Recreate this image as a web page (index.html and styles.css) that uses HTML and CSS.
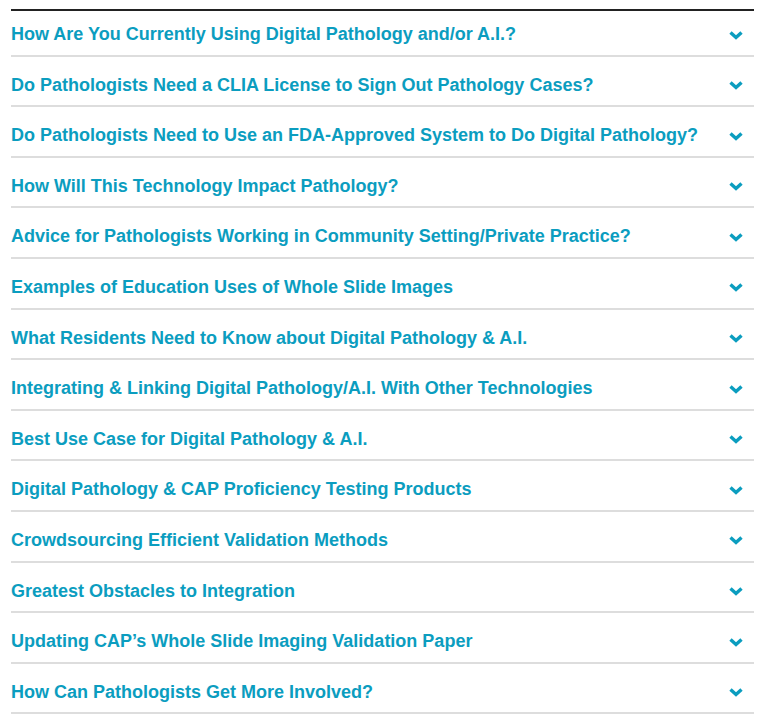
FILE: index.html
```html
<!DOCTYPE html>
<html lang="en">
  <head>
    <meta charset="UTF-8" />
    <meta name="viewport" content="width=device-width, initial-scale=1.0" />
    <title>Digital Pathology FAQ</title>
    <link rel="stylesheet" href="styles.css">
  </head>
  <body>
    <ul class="faq">
      <li class="faqItem"><span class="sporgsmaal">How Are You Currently Using Digital Pathology and/or A.I.?</span><svg class="pil" viewBox="0 0 14 9"><polyline points="1.5,1.5 7,6.5 12.5,1.5" /></svg></li>
      <li class="faqItem"><span class="sporgsmaal">Do Pathologists Need a CLIA License to Sign Out Pathology Cases?</span><svg class="pil" viewBox="0 0 14 9"><polyline points="1.5,1.5 7,6.5 12.5,1.5" /></svg></li>
      <li class="faqItem"><span class="sporgsmaal">Do Pathologists Need to Use an FDA-Approved System to Do Digital Pathology?</span><svg class="pil" viewBox="0 0 14 9"><polyline points="1.5,1.5 7,6.5 12.5,1.5" /></svg></li>
      <li class="faqItem"><span class="sporgsmaal">How Will This Technology Impact Pathology?</span><svg class="pil" viewBox="0 0 14 9"><polyline points="1.5,1.5 7,6.5 12.5,1.5" /></svg></li>
      <li class="faqItem"><span class="sporgsmaal">Advice for Pathologists Working in Community Setting/Private Practice?</span><svg class="pil" viewBox="0 0 14 9"><polyline points="1.5,1.5 7,6.5 12.5,1.5" /></svg></li>
      <li class="faqItem"><span class="sporgsmaal">Examples of Education Uses of Whole Slide Images</span><svg class="pil" viewBox="0 0 14 9"><polyline points="1.5,1.5 7,6.5 12.5,1.5" /></svg></li>
      <li class="faqItem"><span class="sporgsmaal">What Residents Need to Know about Digital Pathology &amp; A.I.</span><svg class="pil" viewBox="0 0 14 9"><polyline points="1.5,1.5 7,6.5 12.5,1.5" /></svg></li>
      <li class="faqItem"><span class="sporgsmaal">Integrating &amp; Linking Digital Pathology/A.I. With Other Technologies</span><svg class="pil" viewBox="0 0 14 9"><polyline points="1.5,1.5 7,6.5 12.5,1.5" /></svg></li>
      <li class="faqItem"><span class="sporgsmaal">Best Use Case for Digital Pathology &amp; A.I.</span><svg class="pil" viewBox="0 0 14 9"><polyline points="1.5,1.5 7,6.5 12.5,1.5" /></svg></li>
      <li class="faqItem"><span class="sporgsmaal">Digital Pathology &amp; CAP Proficiency Testing Products</span><svg class="pil" viewBox="0 0 14 9"><polyline points="1.5,1.5 7,6.5 12.5,1.5" /></svg></li>
      <li class="faqItem"><span class="sporgsmaal">Crowdsourcing Efficient Validation Methods</span><svg class="pil" viewBox="0 0 14 9"><polyline points="1.5,1.5 7,6.5 12.5,1.5" /></svg></li>
      <li class="faqItem"><span class="sporgsmaal">Greatest Obstacles to Integration</span><svg class="pil" viewBox="0 0 14 9"><polyline points="1.5,1.5 7,6.5 12.5,1.5" /></svg></li>
      <li class="faqItem"><span class="sporgsmaal">Updating CAP’s Whole Slide Imaging Validation Paper</span><svg class="pil" viewBox="0 0 14 9"><polyline points="1.5,1.5 7,6.5 12.5,1.5" /></svg></li>
      <li class="faqItem"><span class="sporgsmaal">How Can Pathologists Get More Involved?</span><svg class="pil" viewBox="0 0 14 9"><polyline points="1.5,1.5 7,6.5 12.5,1.5" /></svg></li>
    </ul>
  </body>
</html>
```

FILE: styles.css
```css
/* ---------FAQ LISTE------------*/
* {
  margin: 0;
  padding: 0;
}

body {
  padding: 9px 10px 0 11px;
  background-color: #ffffff;
}

.faq {
  list-style: none;
  border-top: 2px solid #222222;
}

.faqItem {
  display: flex;
  justify-content: space-between;
  align-items: center;
  padding: 18px 11px 10.6px 0;
  border-bottom: 2px solid #dddddd;
  font-family: "Liberation Sans", Arial, sans-serif;
  font-size: 18px;
  font-weight: 700;
  line-height: 20px;
  color: #0b9dbf;
  cursor: pointer;
}

.faqItem:first-child {
  padding-top: 13px;
}

.pil {
  width: 14px;
  height: 9px;
  margin-top: 2px;
  fill: none;
  stroke: #0b9dbf;
  stroke-width: 3.4;
}
```
